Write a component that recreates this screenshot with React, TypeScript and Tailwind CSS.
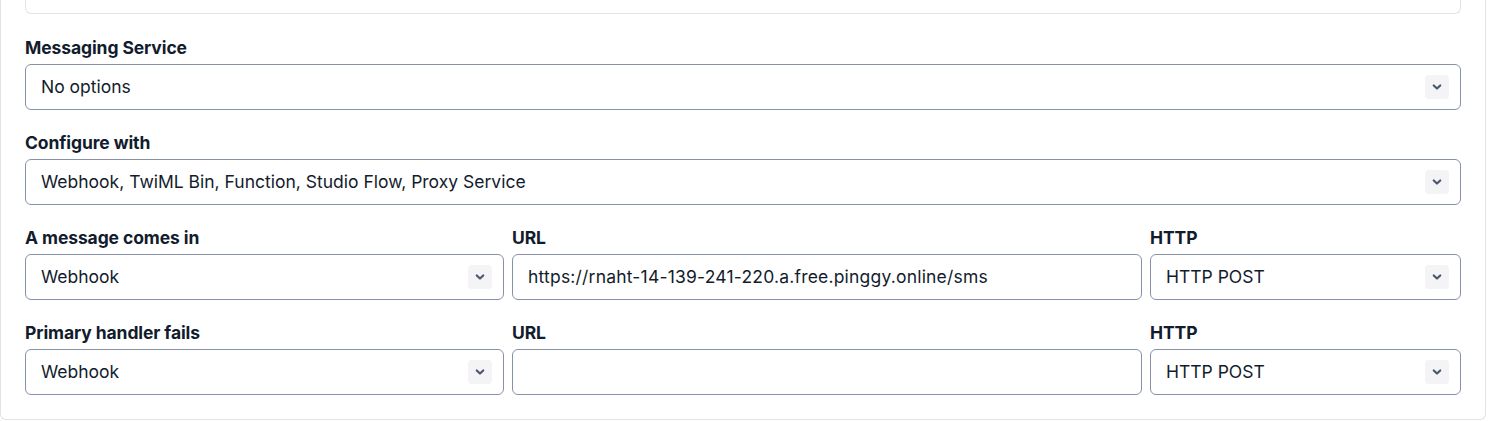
import { ReactNode } from "react";

function Chevron() {
  return (
    <span className="flex h-6 w-6 items-center justify-center rounded-[4px] bg-[#f4f4f6]">
      <svg width="12" height="12" viewBox="0 0 12 12" fill="none">
        <path d="M2.75 4.5l3.25 3 3.25-3" stroke="#4b5671" strokeWidth="2.2" strokeLinecap="round" strokeLinejoin="round" />
      </svg>
    </span>
  );
}

function Field({ label, children }: { label: string; children: ReactNode }) {
  return (
    <div className="flex flex-col">
      <div className="mb-[4px] h-6 text-[17.5px] font-bold leading-6 tracking-[-0.1px] text-[#121c2d]">{label}</div>
      {children}
    </div>
  );
}

function Select({ value }: { value: string }) {
  return (
    <div className="flex h-[46px] items-center justify-between rounded-[6px] border border-[#8891aa] bg-white pl-[15px] pr-[11px]">
      <span className="text-[17.5px] text-[#121c2d]">{value}</span>
      <Chevron />
    </div>
  );
}

function Input({ value }: { value: string }) {
  return (
    <div className="flex h-[46px] items-center rounded-[6px] border border-[#8891aa] bg-white px-[15px]">
      <span className="text-[17.5px] tracking-[0.2px] text-[#121c2d]">{value}</span>
    </div>
  );
}

export default function App() {
  return (
    <div className="h-[421px] w-[1508px] overflow-hidden bg-white font-['Inter',sans-serif]">
      <div className="flex w-[1486px] flex-col rounded-b-[6px] border-x border-b border-[#e1e3ea] px-6 pb-[24px]">
        <div className="h-[14px] rounded-b-[6px] border-x border-b border-[#e1e3ea]" />
        <div className="mt-[22px] flex flex-col gap-[20px]">
          <Field label="Messaging Service">
            <Select value="No options" />
          </Field>
          <div className="mt-[1px]">
            <Field label="Configure with">
              <Select value="Webhook, TwiML Bin, Function, Studio Flow, Proxy Service" />
            </Field>
          </div>
          <div className="mt-[1px] grid grid-cols-[479px_630px_1fr] gap-x-2 gap-y-[21px]">
            <Field label="A message comes in">
              <Select value="Webhook" />
            </Field>
            <Field label="URL">
              <Input value="https://rnaht-14-139-241-220.a.free.pinggy.online/sms" />
            </Field>
            <Field label="HTTP">
              <Select value="HTTP POST" />
            </Field>
            <Field label="Primary handler fails">
              <Select value="Webhook" />
            </Field>
            <Field label="URL">
              <Input value="" />
            </Field>
            <Field label="HTTP">
              <Select value="HTTP POST" />
            </Field>
          </div>
        </div>
      </div>
    </div>
  );
}
